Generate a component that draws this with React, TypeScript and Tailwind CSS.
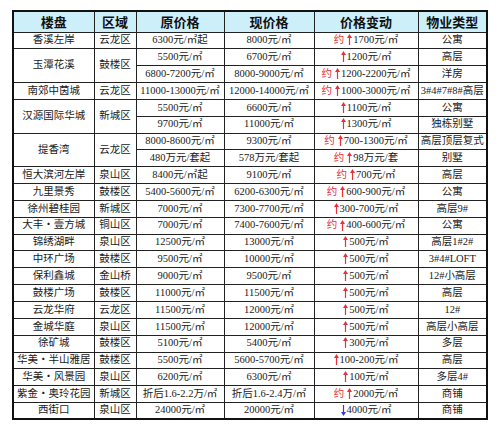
type Change = { approx?: boolean; down?: boolean; text: string }
type Row = {
  name?: string
  area?: string
  span?: number
  orig: string
  curr: string
  change: Change
  type: string
}

const M = '元/㎡'

const rows: Row[] = [
  { name: '香溪左岸', area: '云龙区', orig: '6300' + M + '起', curr: '8000' + M, change: { approx: true, text: '1700' + M }, type: '公寓' },
  { name: '玉潭花溪', area: '鼓楼区', span: 2, orig: '5500' + M, curr: '6700' + M, change: { text: '1200' + M }, type: '高层' },
  { orig: '6800-7200' + M, curr: '8000-9000' + M, change: { approx: true, text: '1200-2200' + M }, type: '洋房' },
  { name: '南郊中茵城', area: '云龙区', orig: '11000-13000' + M, curr: '12000-14000' + M, change: { approx: true, text: '1000-3000' + M }, type: '3#4#7#8#高层' },
  { name: '汉源国际华城', area: '新城区', span: 2, orig: '5500' + M, curr: '6600' + M, change: { text: '1100' + M }, type: '公寓' },
  { orig: '9700' + M, curr: '11000' + M, change: { text: '1300' + M }, type: '独栋别墅' },
  { name: '提香湾', area: '云龙区', span: 2, orig: '8000-8600' + M, curr: '9300' + M, change: { approx: true, text: '700-1300' + M }, type: '高层顶层复式' },
  { orig: '480万元/套起', curr: '578万元/套起', change: { approx: true, text: '98万元/套' }, type: '别墅' },
  { name: '恒大滨河左岸', area: '泉山区', orig: '8400' + M + '起', curr: '9100' + M, change: { approx: true, text: '700' + M }, type: '高层' },
  { name: '九里景秀', area: '鼓楼区', orig: '5400-5600' + M, curr: '6200-6300' + M, change: { approx: true, text: '600-900' + M }, type: '公寓' },
  { name: '徐州碧桂园', area: '新城区', orig: '7000' + M, curr: '7300-7700' + M, change: { text: '300-700' + M }, type: '高层9#' },
  { name: '大丰・壹方城', area: '铜山区', orig: '7000' + M, curr: '7400-7600' + M, change: { approx: true, text: '400-600' + M }, type: '公寓' },
  { name: '锦绣湖畔', area: '泉山区', orig: '12500' + M, curr: '13000' + M, change: { text: '500' + M }, type: '高层1#2#' },
  { name: '中环广场', area: '鼓楼区', orig: '9500' + M, curr: '10000' + M, change: { text: '500' + M }, type: '3#4#LOFT' },
  { name: '保利鑫城', area: '金山桥', orig: '9000' + M, curr: '9500' + M, change: { text: '500' + M }, type: '12#小高层' },
  { name: '鼓楼广场', area: '鼓楼区', orig: '11000' + M, curr: '11500' + M, change: { text: '500' + M }, type: '高层' },
  { name: '云龙华府', area: '云龙区', orig: '11500' + M, curr: '12000' + M, change: { text: '500' + M }, type: '12#' },
  { name: '金城华庭', area: '泉山区', orig: '11500' + M, curr: '12000' + M, change: { text: '500' + M }, type: '高层小高层' },
  { name: '徐矿城', area: '鼓楼区', orig: '5100' + M, curr: '5400' + M, change: { text: '300' + M }, type: '多层' },
  { name: '华美・半山雅居', area: '鼓楼区', orig: '5500' + M, curr: '5600-5700' + M, change: { text: '100-200' + M }, type: '高层' },
  { name: '华美・风景园', area: '泉山区', orig: '6200' + M, curr: '6300' + M, change: { text: '100' + M }, type: '多层4#' },
  { name: '紫金・奥玲花园', area: '新城区', orig: '折后1.6-2.2万/㎡', curr: '折后1.6-2.4万/㎡', change: { approx: true, text: '2000' + M }, type: '商铺' },
  { name: '西街口', area: '泉山区', orig: '24000' + M, curr: '20000' + M, change: { down: true, text: '4000' + M }, type: '商铺' },
]

function Arrow({ down }: { down?: boolean }) {
  return (
    <svg width="5" height="11" viewBox="0 0 5 11" className="inline-block mr-[1px] -mt-[2px] align-middle">
      {down ? (
        <g fill="#3a3ad0" stroke="#3a3ad0">
          <line x1="2.5" y1="0" x2="2.5" y2="8" strokeWidth="1.2" />
          <path d="M0 7 L5 7 L2.5 11 Z" stroke="none" />
        </g>
      ) : (
        <g fill="#e8303a" stroke="#e8303a">
          <line x1="2.5" y1="3" x2="2.5" y2="11" strokeWidth="1.2" />
          <path d="M0 4 L5 4 L2.5 0 Z" stroke="none" />
        </g>
      )}
    </svg>
  )
}

const td = 'border border-[#222] text-center whitespace-nowrap p-0 leading-none'
const th = 'border border-[#222] text-center p-0 font-bold text-[13px] bg-[#cdeffa] text-[#111]'

export default function App() {
  return (
    <div className="w-[500px] h-[428px] bg-white pt-[10px] pl-[12px] font-['Liberation_Serif','Noto_Sans_CJK_SC',serif] text-[10.5px] text-[#1a1a1a]">
      <table className="table-fixed border-collapse border-2 border-[#111] w-[474px]">
        <colgroup>
          <col className="w-[81px]" />
          <col className="w-[42px]" />
          <col className="w-[88px]" />
          <col className="w-[90px]" />
          <col className="w-[104px]" />
          <col className="w-[69px]" />
        </colgroup>
        <thead>
          <tr className="h-[17px] font-['Noto_Sans_CJK_SC',sans-serif]">
            <th className={th}>楼盘</th>
            <th className={th}>区域</th>
            <th className={th}>原价格</th>
            <th className={th}>现价格</th>
            <th className={th}>价格变动</th>
            <th className={th}>物业类型</th>
          </tr>
        </thead>
        <tbody>
          {rows.map((r, i) => (
            <tr key={i} className="h-[16.85px]">
              {r.name && (
                <td rowSpan={r.span} className={td}>
                  {r.name}
                </td>
              )}
              {r.area && (
                <td rowSpan={r.span} className={td}>
                  {r.area}
                </td>
              )}
              <td className={td}>{r.orig}</td>
              <td className={td}>{r.curr}</td>
              <td className={td}>
                {r.change.approx && <span className="text-[#e8303a] mr-[3px]">约</span>}
                <Arrow down={r.change.down} />
                {r.change.text}
              </td>
              <td className={td}>{r.type}</td>
            </tr>
          ))}
        </tbody>
      </table>
    </div>
  )
}
